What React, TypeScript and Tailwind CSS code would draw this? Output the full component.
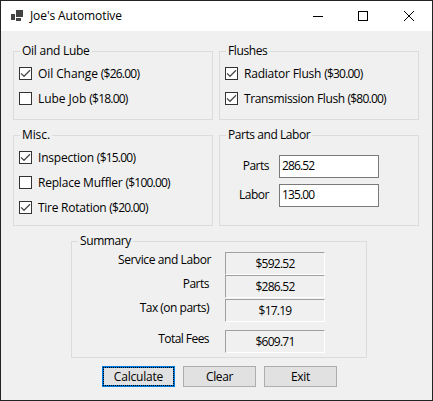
import type { ReactNode } from 'react';

function Group({ title, tracking, size, children }: { title: string; tracking: string; size: string; children: ReactNode }) {
  return (
    <section className={`relative border border-[#dcdcdc] ${size}`}>
      <h2 className={`absolute -top-[9px] left-[6px] h-4 bg-[#f0f0f0] px-[2px] leading-4 whitespace-nowrap ${tracking}`}>{title}</h2>
      {children}
    </section>
  );
}

function Check({ label, price, checked, tracking }: { label: string; price: string; checked?: boolean; tracking: string }) {
  return (
    <div className="flex h-[25px] items-center">
      <span className="h-[13px] w-[13px] shrink-0 border border-[#333] bg-white">
        {checked && (
          <svg width="11" height="11" viewBox="0 0 11 11" fill="none" stroke="#4a4a4a" strokeWidth="1.3">
            <path d="M1 5.4 L4 8.3 L10 2.3" />
          </svg>
        )}
      </span>
      <span className={`ml-[6px] whitespace-nowrap ${tracking}`}>
        {label} <span className="tracking-[-0.78px]">({price})</span>
      </span>
    </div>
  );
}

function Field({ label, value }: { label: string; value: string }) {
  return (
    <div className="flex h-[23px]">
      <span className="mr-[10px] w-[49px] text-right leading-[21px] tracking-[-0.5px]">{label}</span>
      <span className="w-[100px] border border-[#7a7a7a] bg-white pl-[2px] leading-[20px] tracking-[-0.85px]">{value}</span>
    </div>
  );
}

function Total({ label, value, tracking, gap }: { label: string; value: string; tracking: string; gap: string }) {
  return (
    <div className={`flex h-[23px] ${gap}`}>
      <span className={`w-[139px] text-right ${tracking}`}>{label}</span>
      <span className="ml-[14px] w-[100px] border border-t-[#a0a0a0] border-r-white border-b-white border-l-[#a0a0a0] text-center leading-[21px] tracking-[-0.75px]">{value}</span>
    </div>
  );
}

export default function App() {
  return (
    <main className="flex h-[401px] w-[433px] flex-col border border-[#232323] bg-[#f0f0f0] font-['Open_Sans','Noto_Sans',sans-serif] text-[12px] text-black">
      <header className="flex h-[30px] shrink-0 items-center bg-white">
        <svg className="ml-[10px]" width="12" height="12" viewBox="0 0 12 12" fill="#424242" shapeRendering="crispEdges">
          <path d="M5 0h7v7H5zM0 4h4v6H0zM5 8h5v3H5z" />
        </svg>
        <h1 className="ml-[7px] leading-4 tracking-[-0.1px]">Joe's Automotive</h1>
        <svg className="ml-auto mr-[17px]" width="103" height="12" viewBox="0 0 103 12" fill="none" stroke="#000">
          <path d="M1 6.5h10M46.5 1.5h9v9h-9z" shapeRendering="crispEdges" />
          <path d="M92 1l10 10M102 1L92 11" />
        </svg>
      </header>
      <div className="ml-3 mt-5 grid grid-cols-[200px_200px] gap-x-[6px] gap-y-[15px]">
        <Group title="Oil and Lube" tracking="tracking-[-0.26px]" size="h-[69px] pl-[5px] pt-[9px]">
          <Check label="Oil Change" price="$26.00" checked tracking="tracking-[-0.09px]" />
          <Check label="Lube Job" price="$18.00" tracking="tracking-[-0.05px]" />
        </Group>
        <Group title="Flushes" tracking="tracking-[-0.4px]" size="h-[69px] pl-[5px] pt-[9px]">
          <Check label="Radiator Flush" price="$30.00" checked tracking="tracking-[-0.22px]" />
          <Check label="Transmission Flush" price="$80.00" checked tracking="tracking-[-0.36px]" />
        </Group>
        <Group title="Misc." tracking="tracking-[-0.1px]" size="h-[91px] pl-[5px] pt-[9px]">
          <Check label="Inspection" price="$15.00" checked tracking="tracking-[-0.22px]" />
          <Check label="Replace Muffler" price="$100.00" tracking="tracking-[-0.21px]" />
          <Check label="Tire Rotation" price="$20.00" checked tracking="tracking-[-0.26px]" />
        </Group>
        <Group title="Parts and Labor" tracking="tracking-[-0.44px]" size="flex h-[91px] flex-col gap-[6px] pt-[19px]">
          <Field label="Parts" value="286.52" />
          <Field label="Labor" value="135.00" />
        </Group>
      </div>
      <div className="ml-[70px] mt-[15px]">
        <Group title="Summary" tracking="tracking-[-0.4px]" size="h-[117px] w-[296px] pt-[10px]">
          <Total label="Service and Labor" value="$592.52" tracking="leading-[16px] tracking-[-0.4px]" gap="mt-0" />
          <Total label="Parts" value="$286.52" tracking="pr-[2px] leading-[18px] tracking-[-0.5px]" gap="mt-0" />
          <Total label="Tax (on parts)" value="$17.19" tracking="pr-[2px] leading-[18px] tracking-[-0.5px]" gap="mt-px" />
          <Total label="Total Fees" value="$609.71" tracking="pr-[2px] leading-[18px] tracking-[-0.55px]" gap="mt-2" />
        </Group>
      </div>
      <footer className="ml-[101px] mt-2 flex h-[21px] gap-2 leading-[19px]">
        <button className="w-[73px] border-2 border-[#0078d7] bg-[#e1e1e1] leading-[17px] tracking-[-0.2px] outline-1 -outline-offset-2 outline-dotted outline-black">Calculate</button>
        <button className="w-[73px] border border-[#adadad] bg-[#e1e1e1] tracking-[-0.35px]">Clear</button>
        <button className="w-[73px] border border-[#adadad] bg-[#e1e1e1] tracking-[-0.3px]">Exit</button>
      </footer>
    </main>
  );
}
